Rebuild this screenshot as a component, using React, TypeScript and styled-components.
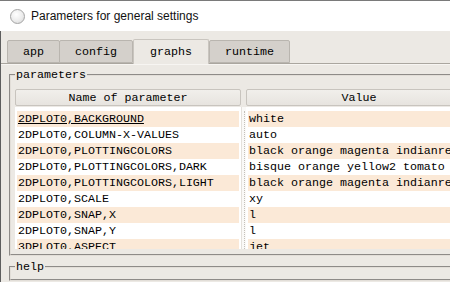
import styled, { createGlobalStyle } from "styled-components";

const GlobalStyle = createGlobalStyle`
    html, body {
        margin: 0;
        padding: 0;
        background: #ece9e4;
        overflow: hidden;
    }
`

const mono = `"Liberation Mono", "DejaVu Sans Mono", monospace`

const Window = styled.div`
    width: 450px;
    height: 282px;
    display: flex;
    flex-direction: column;
    overflow: hidden;
`

const TitleBar = styled.div`
    height: 31px;
    flex-shrink: 0;
    display: flex;
    align-items: center;
    gap: 6px;
    padding-left: 10px;
    box-sizing: border-box;
    background: #fff;
    border-top: 1px solid #7a7a7a;
    font-family: "Liberation Sans", Arial, sans-serif;
    font-size: 12px;
    color: #111;
`

const AppIcon = styled.span`
    width: 13px;
    height: 13px;
    border-radius: 50%;
    border: 1px solid #a4a4a4;
    background: radial-gradient(circle at 40% 35%, #ffffff 0%, #ececec 55%, #d2d2d2 100%);
`

const Body = styled.div`
    flex: 1;
    display: flex;
    flex-direction: column;
    border-left: 1px solid #5e5e5e;
    min-height: 0;
`

const TabBar = styled.div`
    display: flex;
    align-items: flex-end;
    padding: 7px 0 0 6px;
    height: 25px;
`

const Tab = styled.div<{ $active?: boolean }>`
    height: ${(p) => (p.$active ? "25px" : "23px")};
    padding: 0 15px;
    box-sizing: border-box;
    display: flex;
    align-items: center;
    justify-content: center;
    border: 1px solid ${(p) => (p.$active ? "#c9c5bf" : "#b9b5af")};
    border-bottom: ${(p) => (p.$active ? "none" : "1px solid #b9b5af")};
    border-radius: 2px 2px 0 0;
    margin-right: -1px;
    margin-bottom: ${(p) => (p.$active ? "-1px" : "0")};
    position: relative;
    z-index: ${(p) => (p.$active ? 2 : 1)};
    background: ${(p) => (p.$active ? "#ece9e4" : "#d4d0cb")};
    font-family: ${mono};
    font-size: 11.67px;
    color: #000;
    ${(p) => p.$active && "padding: 0 16px; margin-right: 0; margin-left: 1px;"}
`

const Panel = styled.div`
    flex: 1;
    width: 560px;
    border-top: 1px solid #aaa69f;
    box-shadow: inset 0 1px 0 #f7f5f2;
    padding: 4px 0 0 8px;
    display: flex;
    flex-direction: column;
    gap: 4px;
`

const Frame = styled.fieldset`
    margin: 0;
    padding: 0 0 5px 4px;
    border: 2px groove #e2ded8;
    min-width: 0;
`

const Legend = styled.legend`
    padding: 0 1px;
    font-family: ${mono};
    font-size: 11.67px;
    line-height: 14px;
    color: #000;
`

const Table = styled.div`
    display: grid;
    grid-template-columns: 226px 5px 226px;
    margin-top: 7px;
`

const Header = styled.div`
    height: 17px;
    box-sizing: border-box;
    border: 1px solid #c8c4be;
    border-radius: 2px;
    background: linear-gradient(#f1efeb, #e7e4df);
    display: flex;
    align-items: center;
    justify-content: center;
    font-family: ${mono};
    font-size: 11.67px;
    color: #000;
`

const Column = styled.div`
    display: flex;
    flex-direction: column;
`

const Cells = styled.div`
    height: 142px;
    margin-top: 1px;
    padding: 4px 2px 0;
    box-sizing: border-box;
    background: #fff;
    overflow: hidden;
`

const Cell = styled.div<{ $alt: boolean; $focus?: boolean }>`
    height: 16px;
    line-height: 16px;
    padding-left: 1px;
    white-space: nowrap;
    overflow: hidden;
    background: ${(p) => (p.$alt ? "#fbe9d7" : "#fff")};
    font-family: ${mono};
    font-size: 11.67px;
    color: #000;
    text-decoration: ${(p) => (p.$focus ? "underline" : "none")};
`

const Sash = styled.div`
    margin-top: 18px;
    height: 142px;
    background: #faf9f7;
    border-left: 1px solid #e4e1dc;
    display: flex;
    justify-content: center;
    &::after {
        content: "";
        width: 0;
        border-left: 1px dotted #c4c0ba;
        margin-top: 4px;
    }
`

const rows: [string, string][] = [
    ["2DPLOT0,BACKGROUND", "white"],
    ["2DPLOT0,COLUMN-X-VALUES", "auto"],
    ["2DPLOT0,PLOTTINGCOLORS", "black orange magenta indianred4 blue green"],
    ["2DPLOT0,PLOTTINGCOLORS,DARK", "bisque orange yellow2 tomato cyan green"],
    ["2DPLOT0,PLOTTINGCOLORS,LIGHT", "black orange magenta indianred4 blue green"],
    ["2DPLOT0,SCALE", "xy"],
    ["2DPLOT0,SNAP,X", "l"],
    ["2DPLOT0,SNAP,Y", "l"],
    ["3DPLOT0,ASPECT", "jet"],
]

export default function App() {
    return (
        <>
            <GlobalStyle />
            <Window>
                <TitleBar>
                    <AppIcon />
                    <span>Parameters for general settings</span>
                </TitleBar>
                <Body>
                    <TabBar>
                        <Tab>app</Tab>
                        <Tab>config</Tab>
                        <Tab $active>graphs</Tab>
                        <Tab>runtime</Tab>
                    </TabBar>
                    <Panel>
                        <Frame>
                            <Legend>parameters</Legend>
                            <Table>
                                <Column>
                                    <Header>Name of parameter</Header>
                                    <Cells>
                                        {rows.map(([name], i) => (
                                            <Cell key={name} $alt={i % 2 === 0} $focus={i === 0}>{name}</Cell>
                                        ))}
                                    </Cells>
                                </Column>
                                <Sash />
                                <Column>
                                    <Header>Value</Header>
                                    <Cells>
                                        {rows.map(([name, value], i) => (
                                            <Cell key={name} $alt={i % 2 === 0}>{value}</Cell>
                                        ))}
                                    </Cells>
                                </Column>
                            </Table>
                        </Frame>
                        <Frame>
                            <Legend>help</Legend>
                        </Frame>
                    </Panel>
                </Body>
            </Window>
        </>
    )
}
